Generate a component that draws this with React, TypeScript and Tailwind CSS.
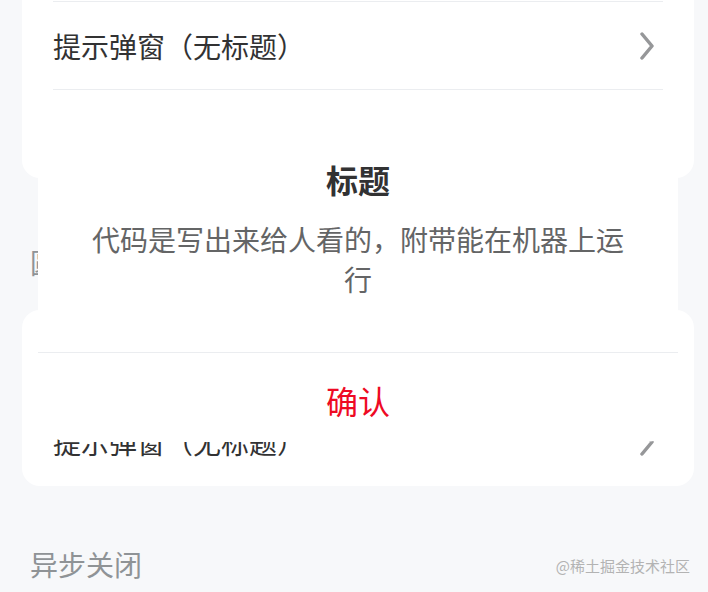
const font = { fontFamily: '"Noto Sans CJK SC", "Noto Sans", sans-serif' };

function Arrow() {
  return (
    <svg width="16" height="28" viewBox="0 0 16 28" className="mr-[8px]">
      <polyline
        points="3,2 13,14 3,26"
        fill="none"
        stroke="#969799"
        strokeWidth="3.5"
        strokeLinecap="round"
        strokeLinejoin="round"
      />
    </svg>
  );
}

function Cell({ label, last }: { label: string; last?: boolean }) {
  return (
    <div className="h-[88px] px-[31px]">
      <div
        className={
          "h-full flex items-center justify-between " +
          (last ? "" : "border-b border-[#ebedf0]")
        }
      >
        <span className="text-[28px] leading-[40px] text-[#323233]">{label}</span>
        <Arrow />
      </div>
    </div>
  );
}

function Card({ rows }: { rows: string[] }) {
  return (
    <div className="mx-[22px] w-[672px] bg-white rounded-[18px] overflow-hidden">
      {rows.map((r, i) => (
        <Cell key={i} label={r} last={i === rows.length - 1} />
      ))}
    </div>
  );
}

function BlockTitle({ text, top }: { text: string; top: string }) {
  return (
    <div className={top + " pb-[32px] px-[30px] text-[28px] leading-[32px] text-[#8f9396]"}>
      {text}
    </div>
  );
}

export default function App() {
  return (
    <div className="relative w-full h-[592px] overflow-hidden bg-[#f7f8fa]" style={font}>
      <div className="-mt-[86px] flex flex-col">
        <Card rows={["提示弹窗", "提示弹窗（无标题）", "确认弹窗"]} />
        <BlockTitle text="圆角按钮样式" top="pt-[68px]" />
        <Card rows={["提示弹窗", "提示弹窗（无标题）"]} />
        <BlockTitle text="异步关闭" top="pt-[62px]" />
        <Card rows={["异步关闭"]} />
      </div>

      <div className="absolute left-[38px] top-[103px] w-[640px] bg-white rounded-[32px] overflow-hidden">
        <div className="pt-[52px] text-center text-[32px] leading-[48px] font-bold text-[#323233]">
          标题
        </div>
        <div className="pt-[16px] px-[48px] pb-[53px] text-center text-[28px] leading-[40px] text-[#646566]">
          代码是写出来给人看的，附带能在机器上运行
        </div>
        <div className="h-[90px] pt-[4px] border-t border-[#ebedf0] flex items-center justify-center text-[32px] text-[#ee0a24]">
          确认
        </div>
      </div>

      <div className="absolute right-[18px] bottom-[16px] text-[15px] leading-[20px] text-[#b3b3b3]">
        @稀土掘金技术社区
      </div>
    </div>
  );
}
